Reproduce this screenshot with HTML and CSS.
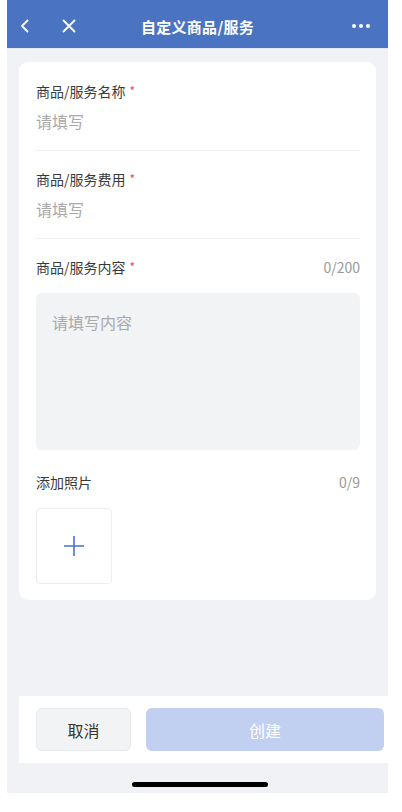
FILE: index.html
```html
<!DOCTYPE html>
<html lang="zh-CN">
<head>
    <meta charset="UTF-8">
    <title>自定义商品/服务</title>
    <link rel="stylesheet" href="styles.css">
</head>
<body>
    <div class="screen">
        <div class="navbar">
            <div class="nav-left">
                <svg class="nav-icon" width="14" height="14" viewBox="0 0 14 14">
                    <path d="M9.5 1.5 L4 7 L9.5 12.5" fill="none" stroke="#fff" stroke-width="1.8" stroke-linecap="round" stroke-linejoin="round"/>
                </svg>
                <svg class="nav-icon close" width="14" height="14" viewBox="0 0 14 14">
                    <path d="M1.5 1.5 L12.5 12.5 M12.5 1.5 L1.5 12.5" fill="none" stroke="#fff" stroke-width="1.8" stroke-linecap="round"/>
                </svg>
            </div>
            <div class="nav-title">自定义商品/服务</div>
            <div class="nav-more">
                <span></span><span></span><span></span>
            </div>
        </div>

        <div class="content">
            <div class="card">
                <div class="field">
                    <div class="label">商品/服务名称<i>*</i></div>
                    <div class="placeholder">请填写</div>
                </div>
                <div class="field">
                    <div class="label">商品/服务费用<i>*</i></div>
                    <div class="placeholder">请填写</div>
                </div>
                <div class="field no-line">
                    <div class="row">
                        <div class="label">商品/服务内容<i>*</i></div>
                        <div class="count">0/200</div>
                    </div>
                    <div class="textarea">请填写内容</div>
                </div>
                <div class="field no-line">
                    <div class="row">
                        <div class="label">添加照片</div>
                        <div class="count">0/9</div>
                    </div>
                    <div class="upload">
                        <svg width="22" height="22" viewBox="0 0 22 22">
                            <path d="M11 1 V21 M1 11 H21" stroke="#4a72d4" stroke-width="1.6"/>
                        </svg>
                    </div>
                </div>
            </div>
        </div>

        <div class="footer">
            <button class="btn cancel">取消</button>
            <button class="btn create" disabled>创建</button>
        </div>
        <div class="home-bar"><span></span></div>
    </div>
</body>
</html>
```

FILE: styles.css
```css
body {
    margin: 0;
    background: #fff;
    font-family: "Noto Sans CJK SC", "Noto Sans", sans-serif;
}

.screen {
    margin-left: 7px;
    width: 381px;
    height: 793px;
    background: #f1f2f6;
    display: flex;
    flex-direction: column;
}

.navbar {
    height: 49px;
    background: #4a74c2;
    border-bottom: 1px solid #e4e7ee;
    box-sizing: border-box;
    display: flex;
    align-items: center;
    padding: 4px 0 0 11px;
}

.nav-left {
    width: 87px;
    display: flex;
    align-items: center;
    gap: 30px;
}

.nav-icon.close {
    margin-top: -1px;
}

.nav-title {
    flex: 1;
    text-align: center;
    color: #fff;
    font-size: 15px;
    font-weight: bold;
    letter-spacing: 0.3px;
}

.nav-more {
    width: 80px;
    display: flex;
    justify-content: flex-end;
    gap: 3px;
    margin-right: 18px;
}

.nav-more span {
    width: 4px;
    height: 4px;
    border-radius: 50%;
    background: #fff;
}

.content {
    flex: 1;
    padding: 13px 12px 0;
}

.card {
    background: #fff;
    border-radius: 9px;
    padding: 18px 16px 16px 17px;
}

.field {
    border-bottom: 1px solid #f2f2f4;
    padding-bottom: 17px;
    margin-bottom: 17px;
}

.field.no-line {
    border-bottom: none;
    padding-bottom: 0;
    margin-bottom: 21px;
}

.field.no-line:last-child {
    margin-bottom: 0;
}

.label {
    font-size: 14px;
    line-height: 22px;
    color: #3a3a3a;
}

.label i {
    font-style: normal;
    color: #f04848;
    font-size: 12px;
    margin-left: 4px;
    vertical-align: top;
}

.placeholder {
    font-size: 16px;
    line-height: 24px;
    color: #aaa;
    margin-top: 7px;
}

.row {
    display: flex;
    justify-content: space-between;
    align-items: center;
}

.count {
    font-size: 14px;
    color: #999;
}

.textarea {
    margin-top: 15px;
    height: 157px;
    box-sizing: border-box;
    background: #f2f3f5;
    border-radius: 6px;
    padding: 17px 16px;
    font-size: 16px;
    line-height: 24px;
    color: #aaa;
}

.upload {
    margin-top: 15px;
    width: 76px;
    height: 76px;
    box-sizing: border-box;
    border: 1px solid #ececef;
    border-radius: 4px;
    display: flex;
    align-items: center;
    justify-content: center;
}

.footer {
    margin-left: 12px;
    height: 67px;
    background: #fff;
    display: flex;
    align-items: center;
    gap: 15px;
    padding: 0 4px 0 17px;
}

.btn {
    height: 43px;
    border-radius: 6px;
    font-family: inherit;
    font-size: 16px;
    border: none;
}

.cancel {
    width: 95px;
    background: #f2f3f5;
    border: 1px solid #e8e9ec;
    color: #333;
}

.create {
    flex: 1;
    background: #c1cff0;
    color: #fff;
}

.home-bar {
    height: 30px;
    display: flex;
    justify-content: center;
    align-items: flex-start;
    padding-top: 19px;
    box-sizing: border-box;
}

.home-bar span {
    width: 136px;
    height: 5px;
    border-radius: 3px;
    background: #000;
    margin-left: 5px;
}
```
